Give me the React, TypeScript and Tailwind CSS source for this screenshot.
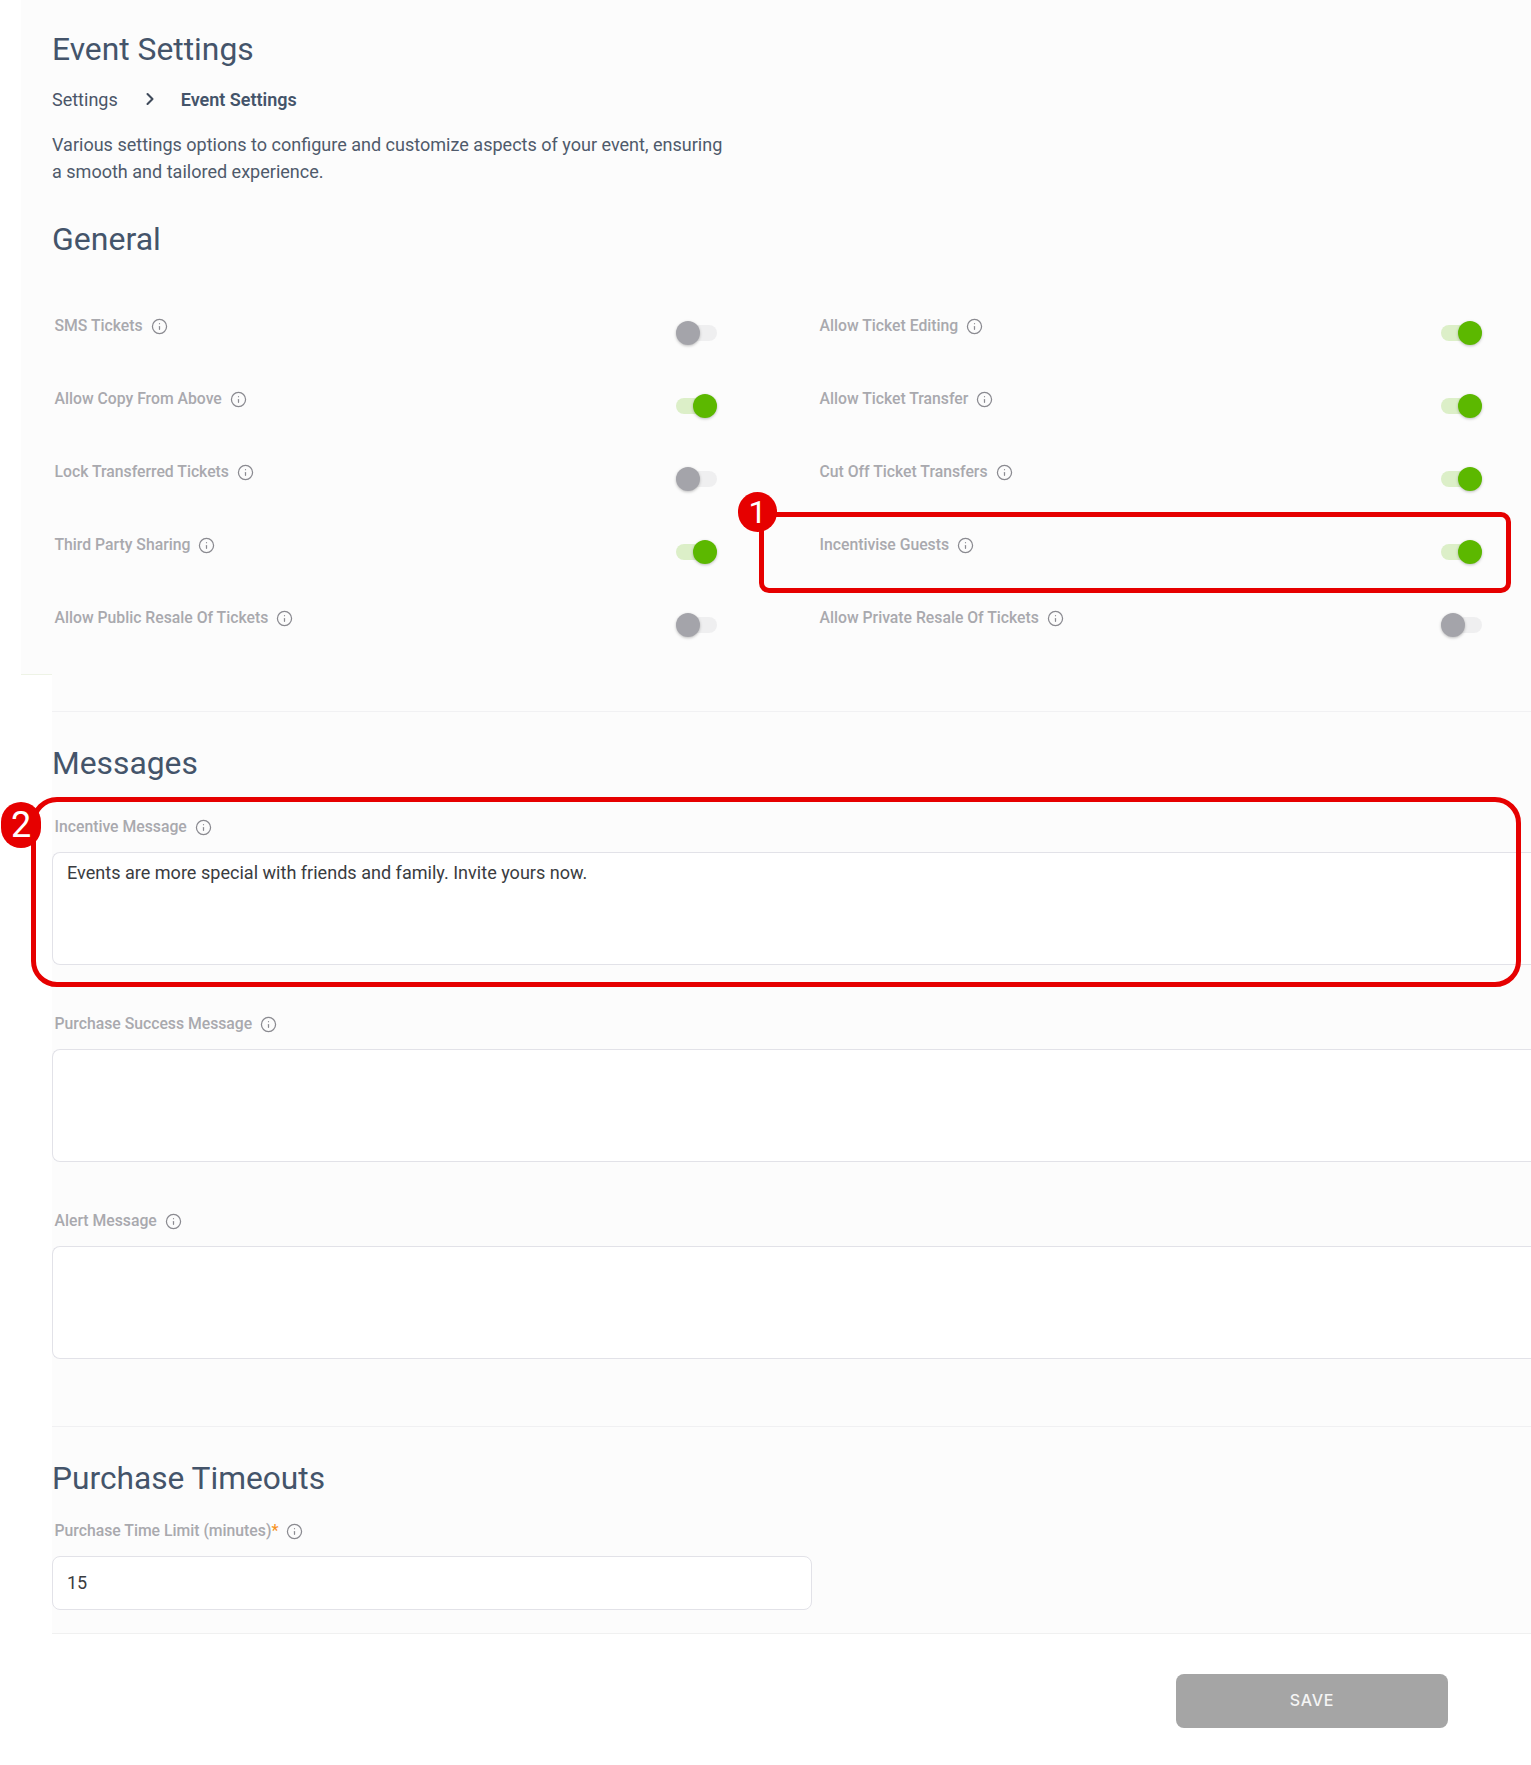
import * as React from "react"
import { ChevronRight, Info } from "lucide-react"

const generalRows = [
	{ left: "SMS Tickets", leftOn: false, right: "Allow Ticket Editing", rightOn: true },
	{ left: "Allow Copy From Above", leftOn: true, right: "Allow Ticket Transfer", rightOn: true },
	{ left: "Lock Transferred Tickets", leftOn: false, right: "Cut Off Ticket Transfers", rightOn: true },
	{ left: "Third Party Sharing", leftOn: true, right: "Incentivise Guests", rightOn: true },
	{ left: "Allow Public Resale Of Tickets", leftOn: false, right: "Allow Private Resale Of Tickets", rightOn: false },
]

function FieldLabel({ text, required }: { text: string; required?: boolean }) {
	return (
		<div className="flex h-[24px] items-center gap-[8px] pl-[2.5px] text-[15.75px] font-medium text-[#a9a9ae]">
			<span>
				{text}
				{required && <span className="text-[#f7931e]">*</span>}
			</span>
			<Info className="h-[17px] w-[17px] text-[#8a8a90]" strokeWidth={1.75} />
		</div>
	)
}

function Toggle({ on }: { on: boolean }) {
	return (
		<div className={`flex h-[16px] w-[41px] items-center rounded-full ${on ? "justify-end bg-[#dcefc8]" : "justify-start bg-[#efeff0]"}`}>
			<div className={`h-[24px] w-[24px] shrink-0 rounded-full shadow-[0_1px_3px_rgba(0,0,0,0.25)] ${on ? "bg-[#5cb800]" : "bg-[#a4a4aa]"}`} />
		</div>
	)
}

function SettingCell({ label, on }: { label: string; on: boolean }) {
	return (
		<div className="flex h-[73px] items-start justify-between">
			<FieldLabel text={label} />
			<div className="mt-[10.5px]">
				<Toggle on={on} />
			</div>
		</div>
	)
}

function MessageField({ label, value, className }: { label: string; value?: string; className?: string }) {
	return (
		<div className={className}>
			<FieldLabel text={label} />
			<div className="mt-[13px] h-[113px] rounded-l-[8px] border border-r-0 border-[#e2e2e8] bg-white px-[14px] py-[6px] text-[18.07px] leading-[27px] text-[#3a3c40]">
				{value}
			</div>
		</div>
	)
}

export default function App() {
	return (
		<div className="relative h-[1765px] w-[1531px] overflow-hidden bg-white font-['Roboto',sans-serif]">
			{/* top part of the panel starts further left */}
			<div className="ml-[21px] h-[674px] bg-[#fcfcfc] pl-[31px]">
				<h1 className="pt-[29px] text-[31.8px] leading-[40px] text-[#44546a]">Event Settings</h1>
				<div className="mt-[16px] flex h-[28px] items-center text-[18px] text-[#4a5568]">
					<span>Settings</span>
					<ChevronRight className="ml-[22px] h-[20px] w-[20px] text-[#3f4a5a]" strokeWidth={2.5} />
					<span className="ml-[21px] font-semibold text-[#44546a]">Event Settings</span>
				</div>
				<p className="mt-[18px] w-[680px] text-[18.05px] leading-[27px] text-[#4f5a6b]">
					Various settings options to configure and customize aspects of your event, ensuring a smooth and tailored experience.
				</p>
				<h2 className="mt-[34px] text-[32px] leading-[40px] text-[#44546a]">General</h2>
				<div className="mt-[55px] grid grid-cols-[665px_665px] gap-x-[100px]">
					{generalRows.map((row) => (
						<React.Fragment key={row.left}>
							<SettingCell label={row.left} on={row.leftOn} />
							<SettingCell label={row.right} on={row.rightOn} />
						</React.Fragment>
					))}
				</div>
			</div>
			<div className="flex h-px">
				<div className="ml-[21px] w-[31px] bg-[#eef3e6]" />
				<div className="flex-1 bg-[#fcfcfc]" />
			</div>

			<div className="ml-[52px] h-[959px] border-b border-[#f0f0f0] bg-[#fcfcfc]">
				<div className="h-[37px] border-b border-[#f1f1f3]" />
				<h2 className="mt-[31px] text-[31.8px] leading-[40px] text-[#44546a]">Messages</h2>
				<MessageField className="mt-[32px]" label="Incentive Message" value="Events are more special with friends and family. Invite yours now." />
				<MessageField className="mt-[47px]" label="Purchase Success Message" />
				<MessageField className="mt-[47px]" label="Alert Message" />
				<div className="mt-[67px] border-t border-[#f0f0f2] pt-[32px]">
					<h2 className="text-[31.7px] leading-[40px] text-[#44546a]">Purchase Timeouts</h2>
					<div className="mt-[20px]">
						<FieldLabel text="Purchase Time Limit (minutes)" required />
					</div>
					<div className="mt-[13px] flex h-[54px] w-[760px] items-center rounded-[8px] border border-[#e2e2e8] bg-white px-[14px] pb-px text-[18px] text-[#3a3c40]">
						15
					</div>
				</div>
			</div>

			<div className="mt-[40px] flex justify-end pr-[83px]">
				<button className="h-[54px] w-[272px] rounded-[8px] bg-[#a5a5a5] pb-[2px] text-[16px] font-medium tracking-[0.05em] text-[#f5f5f5] font-['Inter',sans-serif]">
					SAVE
				</button>
			</div>

			{/* numbered callouts on top of the page */}
			<div className="absolute left-[759px] top-[512px] h-[81px] w-[752px] rounded-[10px] border-[5px] border-[#e60000]" />
			<div className="absolute left-[738px] top-[492px] flex h-[40px] w-[39px] items-center justify-center rounded-full bg-[#e60000] text-[32px] text-white">
				1
			</div>
			<div className="absolute left-[31px] top-[797px] h-[190px] w-[1490px] rounded-[26px] border-[5px] border-[#e60000]" />
			<div className="absolute left-[1px] top-[802px] flex h-[46px] w-[40px] items-center justify-center rounded-full bg-[#e60000] text-[36px] text-white">
				2
			</div>
		</div>
	)
}
